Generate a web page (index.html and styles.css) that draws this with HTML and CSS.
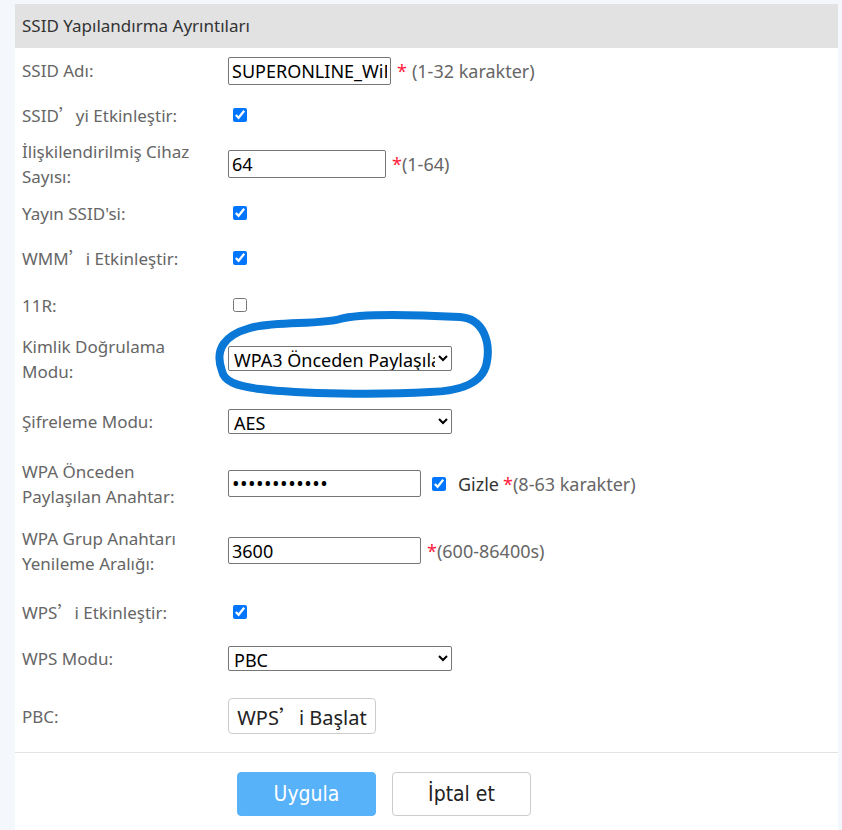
FILE: index.html
```html
<!DOCTYPE html>
<html lang="tr">
<head>
<meta charset="utf-8">
<title>SSID Yapılandırma Ayrıntıları</title>
<link rel="stylesheet" href="styles.css">
</head>
<body>
<div class="panel">
  <div class="panel-head">SSID Yapılandırma Ayrıntıları</div>
  <div class="form">
    <div class="label">SSID Adı:</div>
    <div class="ctrl"><input class="txt w-ssid" type="text" value="SUPERONLINE_WiFi_5G"><span class="req sp">*</span><span class="hint">(1-32 karakter)</span></div>

    <div class="label">SSID<span class="q">’</span>yi Etkinleştir:</div>
    <div class="ctrl"><input class="chk" type="checkbox" checked></div>

    <div class="label">İlişkilendirilmiş Cihaz Sayısı:</div>
    <div class="ctrl"><input class="txt w-num" type="text" value="64"><span class="req">*</span><span class="hint">(1-64)</span></div>

    <div class="label">Yayın SSID'si:</div>
    <div class="ctrl"><input class="chk" type="checkbox" checked></div>

    <div class="label">WMM<span class="q">’</span>i Etkinleştir:</div>
    <div class="ctrl"><input class="chk" type="checkbox" checked></div>

    <div class="label">11R:</div>
    <div class="ctrl"><input class="chk" type="checkbox"></div>

    <div class="label">Kimlik Doğrulama Modu:</div>
    <div class="ctrl"><select class="sel"><option>WPA3 Önceden Paylaşılan Anahtar</option></select></div>

    <div class="label">Şifreleme Modu:</div>
    <div class="ctrl"><select class="sel"><option>AES</option></select></div>

    <div class="label">WPA Önceden Paylaşılan Anahtar:</div>
    <div class="ctrl"><input class="txt w-long pw" type="password" value="superonline1"><input class="chk chk-gap" type="checkbox" checked><span class="gizle">Gizle</span><span class="req">*</span><span class="hint">(8-63 karakter)</span></div>

    <div class="label">WPA Grup Anahtarı Yenileme Aralığı:</div>
    <div class="ctrl"><input class="txt w-long" type="text" value="3600"><span class="req">*</span><span class="hint">(600-86400s)</span></div>

    <div class="label">WPS<span class="q">’</span>i Etkinleştir:</div>
    <div class="ctrl"><input class="chk" type="checkbox" checked></div>

    <div class="label">WPS Modu:</div>
    <div class="ctrl"><select class="sel"><option>PBC</option></select></div>

    <div class="label">PBC:</div>
    <div class="ctrl"><button class="btn-wps" type="button">WPS<span class="q">’</span>i Başlat</button></div>
  </div>
  <div class="footer">
    <button class="btn btn-primary" type="button">Uygula</button>
    <button class="btn btn-default" type="button">İptal et</button>
  </div>
  <svg class="mark" width="300" height="100" viewBox="0 0 300 100" aria-hidden="true">
    <path d="M 17 67 C 9 45, 20 31, 45 24 C 70 17, 115 21, 135 15 C 155 9, 215 11, 255 13 C 280 15, 285 40, 282 57 C 279 80, 255 87, 225 88 C 175 91, 95 90, 55 85 C 30 82, 19 77, 17 67 Z" fill="none" stroke="#0a78d7" stroke-width="8" stroke-linecap="round" stroke-linejoin="round"/>
  </svg>
</div>
</body>
</html>
```
FILE: styles.css
```css
html, body {
  margin: 0;
  padding: 0;
}
body {
  background: #f4f7fc;
  font-family: "Noto Sans", "Open Sans", "Noto Sans CJK SC", sans-serif;
  font-size: 17px;
  color: #666;
  padding-top: 4px;
  padding-left: 15px;
  padding-right: 4px;
  overflow: hidden;
}
.panel {
  position: relative;
  background: #fff;
  min-height: 830px;
}
.panel-head {
  background: #e2e2e2;
  height: 44px;
  line-height: 44px;
  padding-left: 7px;
  color: #333;
  font-size: 17px;
}
.form {
  display: grid;
  grid-template-columns: 206px 1fr;
  grid-template-rows: 45px 44px 54px 44px 46px 48px 59px 66px 59px 75px 48px 44px 72px;
  padding-left: 7px;
}
.label {
  align-self: center;
  line-height: 25px;
  max-width: 192px;
  color: #666;
}
.q {
  font-family: "Noto Sans CJK SC", sans-serif;
  display: inline-block;
  width: 1em;
}
.ctrl {
  display: flex;
  align-items: center;
  white-space: nowrap;
  font-size: 18px;
}
.txt {
  box-sizing: border-box;
  height: 28px;
  border: 1px solid #767676;
  border-radius: 2px;
  padding: 0 3px;
  font-family: inherit;
  font-size: 18px;
  color: #000;
  margin: 0;
}
.pw {
  font-size: 20px;
  letter-spacing: 0.5px;
}
.w-ssid { width: 163px; }
.w-num { width: 158px; }
.w-long { width: 193px; height: 27px; }
.sel {
  box-sizing: border-box;
  width: 224px;
  height: 25px;
  border: 1px solid #767676;
  border-radius: 2px;
  font-family: inherit;
  font-size: 18px;
  color: #000;
  background: #fff;
  margin: 0;
  padding: 0 0 0 1px;
}
.chk {
  width: 14px;
  height: 14px;
  margin: 0 0 0 5px;
  accent-color: #0075ff;
}
.chk-gap {
  margin-left: 11px;
}
.gizle {
  color: #333;
  margin-left: 12px;
}
.req {
  color: #ff1a3c;
  margin-left: 6px;
}
.req.sp {
  margin-right: 5px;
}
.gizle + .req {
  margin-left: 4px;
}
.hint {
  color: #666;
}
.btn-wps {
  box-sizing: border-box;
  height: 36px;
  width: 148px;
  border: 1px solid #ccc;
  border-radius: 4px;
  background: #fff;
  color: #222;
  font-family: inherit;
  font-size: 20px;
  padding: 0;
  margin: 0;
}
.footer {
  border-top: 1px solid #e3e3e3;
  display: flex;
  gap: 16px;
  padding: 19px 0 20px 222px;
}
.btn {
  box-sizing: border-box;
  width: 139px;
  height: 44px;
  border-radius: 4px;
  font-family: "DejaVu Sans Condensed", "Noto Sans", sans-serif;
  font-size: 21px;
  margin: 0;
}
.btn-primary {
  background: #58b2f9;
  border: 1px solid #58b2f9;
  color: #fff;
}
.btn-default {
  background: #fff;
  border: 1px solid #ccc;
  color: #222;
}
.mark {
  position: absolute;
  left: 190px;
  top: 300px;
}
```
